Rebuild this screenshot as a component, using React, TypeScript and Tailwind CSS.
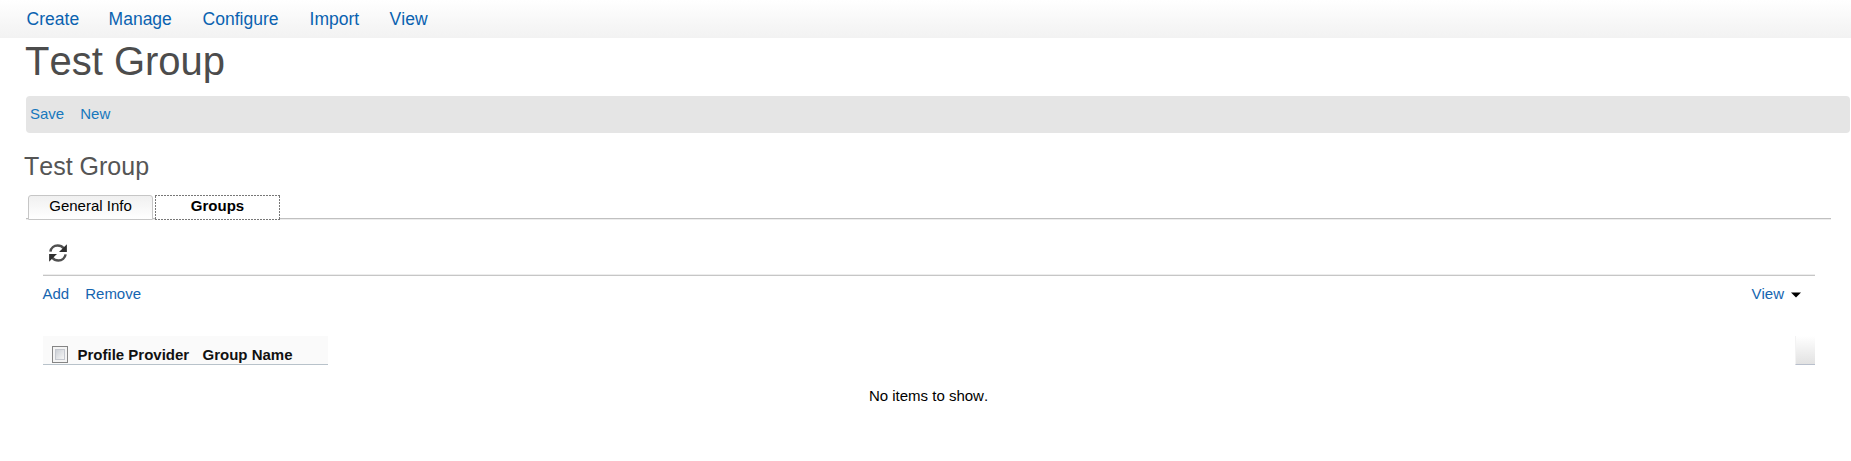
const menu = [
  { label: 'Create', cls: 'w-[82px]' },
  { label: 'Manage', cls: 'w-[94px]' },
  { label: 'Configure', cls: 'w-[107px]' },
  { label: 'Import', cls: 'w-[80px]' },
  { label: 'View', cls: 'w-[60px]' },
];

function RefreshIcon() {
  return (
    <svg className="block" width="18" height="18" viewBox="0 0 18 18" fill="none">
      <path d="M1.4 7.6C2 3.8 5 1.5 8.6 1.5c2.4 0 4.6.9 6 2.7" stroke="#505050" strokeWidth="2.5" />
      <path d="M17.9.2v7.9H10z" fill="#2e2e2e" />
      <path d="M16.6 10.4c-.6 3.8-3.6 6.1-7.2 6.1-2.4 0-4.6-.9-6-2.7" stroke="#505050" strokeWidth="2.5" />
      <path d="M.1 17.8V9.9H8z" fill="#2e2e2e" />
    </svg>
  );
}

export default function App() {
  return (
    <div className="flex h-[461px] w-full flex-col overflow-hidden bg-white font-['Liberation_Sans',Arial,sans-serif] text-[15px] leading-[18px] text-black [font-kerning:none]">
      <nav className="flex h-[38px] shrink-0 bg-gradient-to-b from-white to-[#f2f2f2] pt-[9px] pl-[26.6px] text-[17.5px] leading-5 text-[#0a62b0]">
        {menu.map((m) => (
          <a key={m.label} className={m.cls}>{m.label}</a>
        ))}
      </nav>
      <h1 className="h-[58px] shrink-0 pl-[25px] text-[40px] leading-[46px] text-[#4c4c4c]">Test Group</h1>
      <div className="mr-px ml-[26px] flex h-[37px] shrink-0 gap-[16px] rounded-[4px] bg-[#e5e5e5] pt-[9px] pl-[4px] text-[#1778bd]">
        <a>Save</a>
        <a>New</a>
      </div>
      <h2 className="mt-[19px] h-[43px] shrink-0 pl-[24px] text-[25px] leading-[29px] text-[#555]">Test Group</h2>
      <div className="flex h-[25px] shrink-0 pr-[20px] pl-[26px]">
        <div className="mt-[23px] h-[2px] w-[2px] border-t border-[#c0c0c0] bg-[#ededed]" />
        <div className="h-[25px] w-[125px] rounded-t-[3px] border border-[#c6c6c6] bg-gradient-to-b from-[#f0f0f0] to-white pt-px text-center">General Info</div>
        <div className="mt-[23px] h-[2px] w-[2px] border-t border-[#c0c0c0] bg-[#ededed]" />
        <div className="h-[25px] w-[125px] bg-[repeating-linear-gradient(90deg,#777_0_2px,#fff_2px_3px)] py-px">
          <div className="h-full bg-[repeating-linear-gradient(180deg,#777_0_2px,#fff_2px_3px)] px-px">
            <div className="h-full bg-white pt-px text-center font-bold">Groups</div>
          </div>
        </div>
        <div className="mt-[23px] h-[2px] flex-1 border-t border-[#c0c0c0] bg-[#ededed]" />
      </div>
      <div className="mr-[36px] ml-[42px] flex flex-col pl-px">
        <div className="h-[54px] pt-[24px] pl-[6px]"><RefreshIcon /></div>
        <div className="h-[2px] border-b border-[#c6c6c6] bg-[#ededed]" />
        <div className="mt-[9px] flex h-[18px] gap-[16px] text-[#1565b0]">
          <a className="-ml-[0.5px]">Add</a>
          <a>Remove</a>
          <div className="ml-auto flex items-center gap-[7px] pr-[14px]">
            <span>View</span>
            <svg className="mt-[2px]" width="10" height="6" viewBox="0 0 10 6"><path d="M0 .5h10L5 5.5z" fill="#000" /></svg>
          </div>
        </div>
        <div className="mt-[33px] flex h-[29px] justify-between">
          <div className="flex w-[285px] border-b border-[#b8c2ca] bg-[#fafafa] pt-[10px] pl-[9px] font-bold text-[#111]">
            <span className="block h-[17px] w-[16px] border border-[#858585] bg-[#f4f4f4] p-[2px]">
              <span className="block h-full w-full border border-[#c5c8cf] bg-gradient-to-br from-[#ccd0d6] to-[#f6f6f6]" />
            </span>
            <span className="ml-[9.5px] w-[125px]">Profile Provider</span>
            <span>Group Name</span>
          </div>
          <div className="w-[20px] border-b border-l border-b-[#b8bfcc] border-l-[#f3f3f3] bg-gradient-to-b from-white to-[#e2e2e2]" />
        </div>
        <div className="mt-[22px] pr-px text-center">No items to show.</div>
      </div>
    </div>
  );
}
